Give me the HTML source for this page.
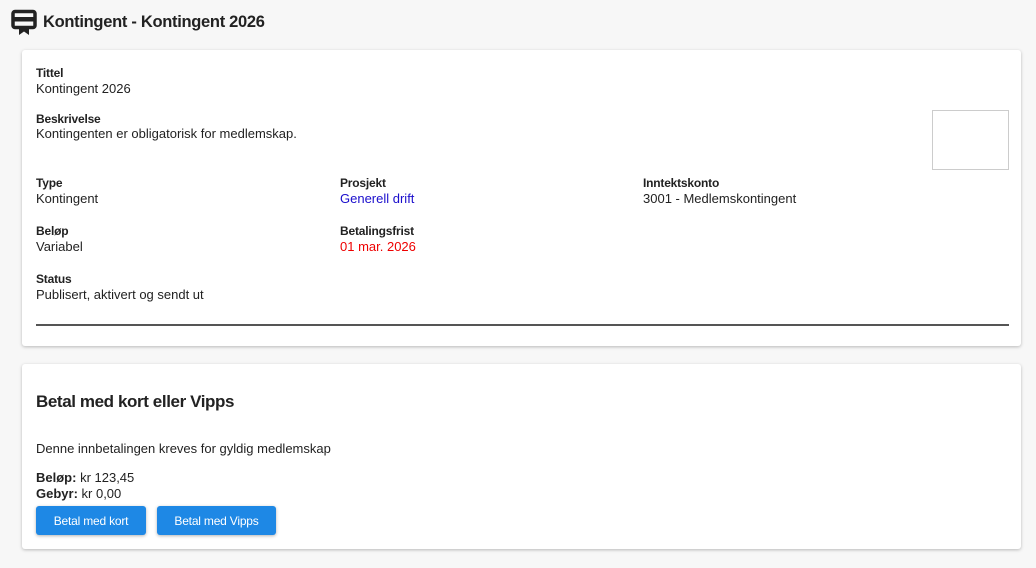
<!DOCTYPE html>
<html><head><meta charset="utf-8"><style>
*{box-sizing:border-box}
body{margin:0;width:1036px;height:568px;background:#f7f7f7;font-family:"Liberation Sans",sans-serif;color:#222;font-size:13px;overflow:hidden;position:relative}
.hdr{position:absolute;left:11px;top:9px;display:flex;align-items:center}
.hdr h1{margin:0 0 0 6px;font-size:16.5px;font-weight:bold;letter-spacing:-0.3px}
.card{position:absolute;left:22px;width:999px;background:#fff;border-radius:3px;box-shadow:0 1px 3px rgba(0,0,0,.25)}
.l{font-weight:bold;font-size:12px;position:absolute;letter-spacing:-0.2px}
.v{position:absolute;font-size:13px}
.btn{position:absolute;top:506px;height:29px;background:#1e88e5;color:#fff;border-radius:3px;font-size:12px;display:flex;align-items:center;justify-content:center;box-shadow:0 1px 3px rgba(0,0,0,.3);letter-spacing:-0.2px}
</style></head><body>
<div class="hdr"><svg width="26" height="26" viewBox="0 0 26 26"><rect x="2" y="2.5" width="22" height="16" rx="2" fill="none" stroke="#222" stroke-width="3.5"/><rect x="2" y="8" width="22" height="4.5" fill="#222"/><path d="M8 18 L8 26 L13 22.5 L18 26 L18 18Z" fill="#222"/></svg><h1>Kontingent - Kontingent 2026</h1></div>
<div class="card" style="top:50px;height:296px"></div>
<div class="l" style="left:36px;top:66px">Tittel</div><div class="v" style="left:36px;top:81px">Kontingent 2026</div>
<div class="l" style="left:36px;top:112px">Beskrivelse</div><div class="v" style="left:36px;top:126px">Kontingenten er obligatorisk for medlemskap.</div>
<div style="position:absolute;left:932px;top:110px;width:77px;height:60px;border:1px solid #ccc"></div>
<div class="l" style="left:36px;top:176px">Type</div><div class="v" style="left:36px;top:191px">Kontingent</div>
<div class="l" style="left:340px;top:176px">Prosjekt</div><div class="v" style="left:340px;top:191px;color:#1a0dcc">Generell drift</div>
<div class="l" style="left:643px;top:176px">Inntektskonto</div><div class="v" style="left:643px;top:191px">3001 - Medlemskontingent</div>
<div class="l" style="left:36px;top:224px">Beløp</div><div class="v" style="left:36px;top:239px">Variabel</div>
<div class="l" style="left:340px;top:224px">Betalingsfrist</div><div class="v" style="left:340px;top:239px;color:#e00">01 mar. 2026</div>
<div class="l" style="left:36px;top:272px">Status</div><div class="v" style="left:36px;top:287px">Publisert, aktivert og sendt ut</div>
<div style="position:absolute;left:36px;top:324px;width:973px;height:2px;background:#555"></div>
<div class="card" style="top:364px;height:185px"></div>
<div style="position:absolute;left:36px;top:392px;font-size:17px;font-weight:bold;letter-spacing:-0.4px">Betal med kort eller Vipps</div>
<div class="v" style="left:36px;top:441px">Denne innbetalingen kreves for gyldig medlemskap</div>
<div class="v" style="left:36px;top:470px"><b>Beløp:</b> kr 123,45</div>
<div class="v" style="left:36px;top:486px"><b>Gebyr:</b> kr 0,00</div>
<div class="btn" style="left:36px;width:110px">Betal med kort</div>
<div class="btn" style="left:157px;width:119px">Betal med Vipps</div>
</body></html>
